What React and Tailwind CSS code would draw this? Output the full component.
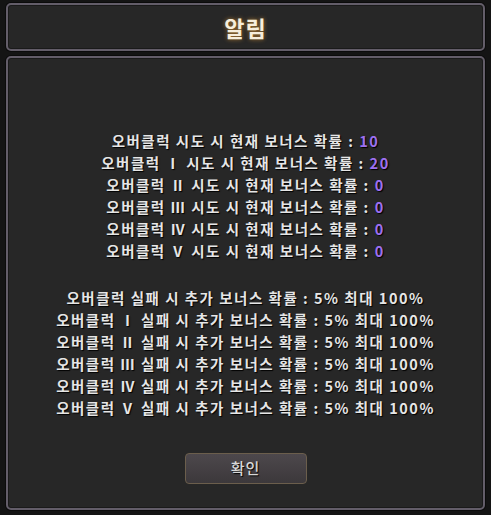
const tryLines = [
  ['오버클럭 시도 시 현재 보너스 확률 : ', '10'],
  ['오버클럭 Ⅰ 시도 시 현재 보너스 확률 : ', '20'],
  ['오버클럭 Ⅱ 시도 시 현재 보너스 확률 : ', '0'],
  ['오버클럭 Ⅲ 시도 시 현재 보너스 확률 : ', '0'],
  ['오버클럭 Ⅳ 시도 시 현재 보너스 확률 : ', '0'],
  ['오버클럭 Ⅴ 시도 시 현재 보너스 확률 : ', '0'],
]

const failLines = [
  '오버클럭 실패 시 추가 보너스 확률 : 5% 최대 100%',
  '오버클럭 Ⅰ 실패 시 추가 보너스 확률 : 5% 최대 100%',
  '오버클럭 Ⅱ 실패 시 추가 보너스 확률 : 5% 최대 100%',
  '오버클럭 Ⅲ 실패 시 추가 보너스 확률 : 5% 최대 100%',
  '오버클럭 Ⅳ 실패 시 추가 보너스 확률 : 5% 최대 100%',
  '오버클럭 Ⅴ 실패 시 추가 보너스 확률 : 5% 최대 100%',
]

function Panel({ className, children }) {
  return (
    <div
      className={
        'rounded-[5px] border-2 border-[#635d69] bg-[#272727] shadow-[0_0_0_1px_#0b0b0b,inset_0_0_0_1px_#1a1a1a] ' +
        className
      }
    >
      {children}
    </div>
  )
}

export default function App() {
  return (
    <div
      className="flex h-[515px] w-[491px] flex-col gap-[5px] bg-[#141414] px-[6px] pt-[3px] pb-[5px]"
      style={{ fontFamily: '"Noto Sans CJK KR", "Noto Sans", sans-serif' }}
    >
      <Panel className="flex h-[48px] shrink-0 items-center justify-center">
        <span className="text-[22px] font-bold tracking-[1px] text-[#f6eedc] [text-shadow:0_0_4px_#b07a30]">알림</span>
      </Panel>
      <Panel className="flex flex-1 flex-col items-center pt-[72px]">
        <div className="flex flex-col items-center text-[14.5px] font-semibold leading-[22px] tracking-[1.5px] text-[#e6e6e6] [text-shadow:1px_1px_1px_#000]">
          {tryLines.map(([label, value]) => (
            <p key={label}>
              {label}
              <span className="text-[#9d70f0]">{value}</span>
            </p>
          ))}
        </div>
        <div className="mt-[25px] flex flex-col items-center text-[14.5px] font-semibold leading-[22px] tracking-[1.5px] text-[#e6e6e6] [text-shadow:1px_1px_1px_#000]">
          {failLines.map((line) => (
            <p key={line}>{line}</p>
          ))}
        </div>
        <button className="mt-[34px] h-[31px] w-[122px] rounded-[4px] border border-[#6b5e4c] bg-gradient-to-b from-[#4d484c] to-[#3c383b] text-[15px] font-medium tracking-[1px] text-[#d8d8d8] [text-shadow:1px_1px_1px_#000]">
          확인
        </button>
      </Panel>
    </div>
  )
}
